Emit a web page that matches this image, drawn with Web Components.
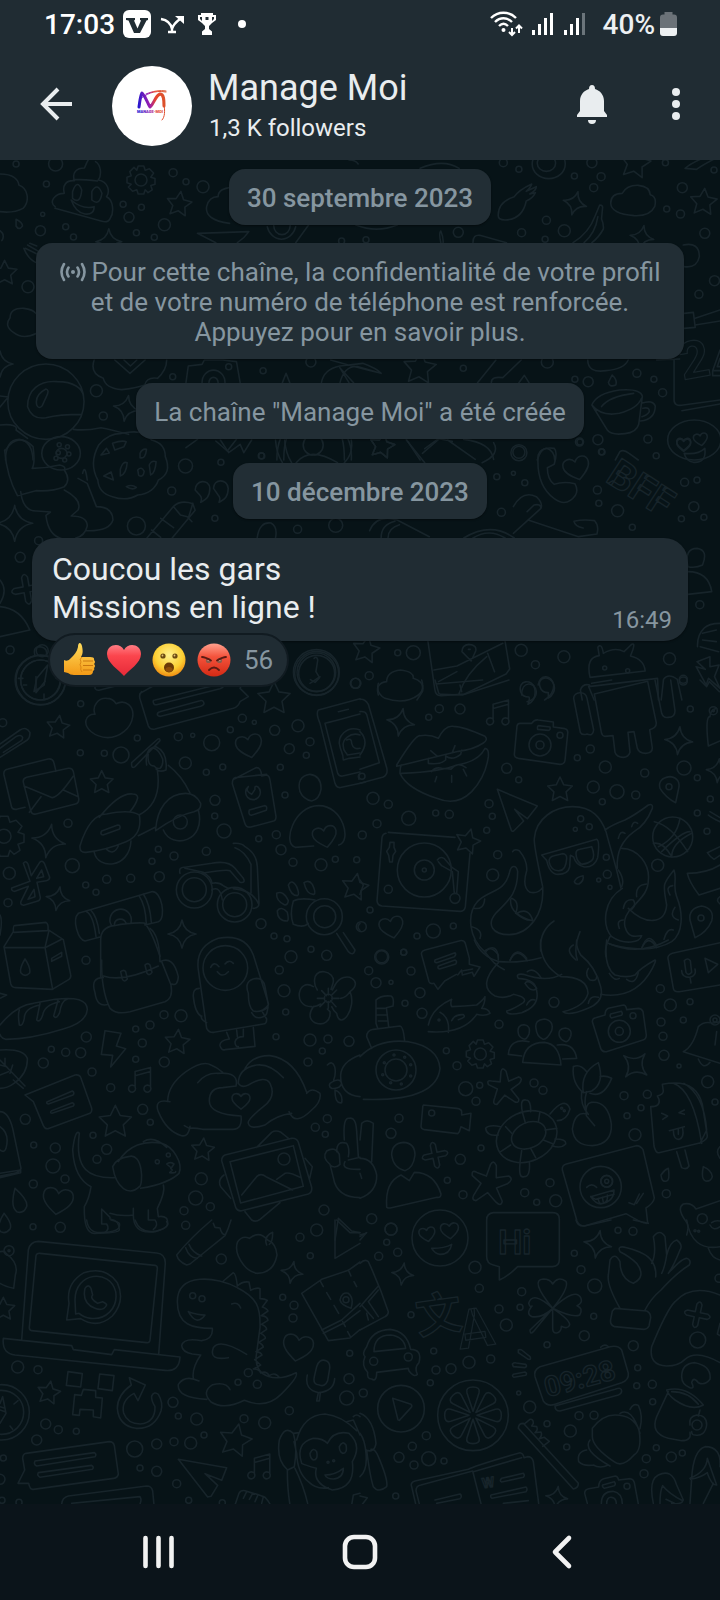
<!DOCTYPE html>
<html lang="fr">
<head>
<meta charset="utf-8">
<meta name="viewport" content="width=device-width, initial-scale=1">
<title>Manage Moi</title>
<style>
  body {
    margin: 0;
    background: #0b141a;
    color: #e9edef;
    font-family: Roboto, "Noto Sans", sans-serif;
  }
</style>
</head>
<body>
<channel-app>
  <status-bar slot="top" time="17:03" battery="40%"></status-bar>
  <channel-header slot="top" name="Manage Moi" followers="1,3 K followers"></channel-header>
  <chat-chip strong>30 septembre 2023</chat-chip>
  <chat-chip class="notice" wide icon>Pour cette chaîne, la confidentialité de votre profil et de votre numéro de téléphone est renforcée. Appuyez pour en savoir plus.</chat-chip>
  <chat-chip>La chaîne "Manage Moi" a été créée</chat-chip>
  <chat-chip strong>10 décembre 2023</chat-chip>
  <chat-message time="16:49">
    Coucou les gars<br>Missions en ligne !
    <reaction-pill slot="reactions" count="56"></reaction-pill>
  </chat-message>
  <nav-bar slot="bottom"></nav-bar>
</channel-app>

<script>
  class ChannelApp extends HTMLElement {
    connectedCallback() {
      this.attachShadow({ mode: 'open' });
      this.shadowRoot.innerHTML = `
        <style>
          :host {
            display: flex;
            flex-direction: column;
            min-height: 100vh;
          }
          header {
            background: #202c33;
          }
          main {
            position: relative;
            flex: 1;
            overflow: hidden;
            background: #071317;
          }
          .feed {
            position: relative;
            display: flex;
            flex-direction: column;
            align-items: center;
            gap: 24px;
            padding: 9px 32px 24px;
          }
          ::slotted(.notice) {
            margin-top: -6px;
          }
          ::slotted(chat-message) {
            margin-top: -5px;
          }
        </style>
        <header><slot name="top"></slot></header>
        <main>
          <doodle-wallpaper></doodle-wallpaper>
          <div class="feed"><slot></slot></div>
        </main>
        <slot name="bottom"></slot>
      `;
    }
  }

  class StatusBar extends HTMLElement {
    connectedCallback() {
      this.attachShadow({ mode: 'open' });
      this.shadowRoot.innerHTML = `
        <style>
          :host {
            display: flex;
            align-items: center;
            justify-content: space-between;
            height: 48px;
            padding: 0 43px 0 44px;
            color: #fff;
            font-size: 28px;
            font-weight: 500;
            line-height: 32px;
          }
          .side {
            display: flex;
            align-items: center;
          }
          .left { gap: 8px; }
          .right { gap: 5px; color: #edf0f2; }
          span { padding-top: 2px; }
          svg { display: block; }
        </style>
        <div class="side left">
          <span>${this.getAttribute('time')}</span>
          <svg width="28" height="28" viewBox="0 0 28 28">
            <rect width="28" height="28" rx="6" fill="#fff"/>
            <path d="M3 8h9v2l-1 .5 3.500 8 3.500-8L17 10V8h8v2l-1.500.5L17 23h-6L5.500 10.500 3 10z" fill="#202c33"/>
          </svg>
          <svg width="30" height="24" viewBox="0 0 30 24" fill="none" stroke="#fff" stroke-width="2.400">
            <path d="M2 7C8 8 12 12 13 17M13 17C14 13 17 10 21 7M13 15v6M9 20h8"/>
            <path d="M16 4h9v8z" fill="#fff" stroke="none"/>
          </svg>
          <svg width="20" height="24" viewBox="0 0 20 24">
            <path d="M4 1h12v2h3v5l-4 3-3 3v3l3 2.500V23H5v-3.500L8 17v-3l-3-3-4-3V3h3z" fill="#fff"/>
            <path d="M3 5v2l2 2V5zM17 5v2l-2 2V5zM8.500 5h3v3h-3z" fill="#202c33"/>
          </svg>
          <svg width="40" height="24" viewBox="0 0 40 24"><circle cx="17" cy="12" r="4" fill="#fff"/></svg>
        </div>
        <div class="side right">
          <svg width="35" height="26" viewBox="0 0 35 26" fill="none" stroke="#fff" stroke-width="2.400">
            <path d="M3 7C10 0 21 0 28 7M7 11c5-5 12-5 17 0M11 15c3-3 6-3 9 0"/>
            <circle cx="15.500" cy="19" r="2" fill="#fff" stroke="none"/>
            <path d="M24 17v7M21 21l3 3 3-3M31 22v-7.500M28 17.500l3-3 3 3" stroke-width="2"/>
          </svg>
          <svg width="70" height="26" viewBox="0 0 70 26" stroke="#fff" stroke-width="3">
            <path d="M5.500 19v5M11.500 13v11M17.500 7v17M23.500 2v22M37.500 19v5M43.500 13v11M49.500 7v17"/>
            <path d="M55.500 2v22" stroke="#6b757b"/>
          </svg>
          <span>${this.getAttribute('battery')}</span>
          <svg width="17" height="24" viewBox="0 0 17 24">
            <path d="M4.500 0h8v2.500H14q3 0 3 3V16H0V5.500q0-3 3-3h1.500z" fill="#6b7278"/>
            <path d="M0 16h17v5q0 3-3 3H3q-3 0-3-3z" fill="#edf0f2"/>
          </svg>
        </div>
      `;
    }
  }

  class ChannelHeader extends HTMLElement {
    connectedCallback() {
      this.attachShadow({ mode: 'open' });
      this.shadowRoot.innerHTML = `
        <style>
          :host {
            display: flex;
            align-items: center;
            height: 112px;
            padding: 0 20px 0 32px;
          }
          button {
            display: grid;
            place-items: center;
            width: 48px;
            height: 56px;
            padding: 0;
            border: 0;
            background: none;
            color: #e9edef;
          }
          .avatar {
            display: block;
            width: 80px;
            height: 80px;
            margin: 4px 16px 0 32px;
            border-radius: 50%;
            background: #fff;
          }
          .who {
            flex: 1;
            min-width: 0;
            padding-top: 4px;
          }
          h1, p {
            margin: 0;
            font-weight: 400;
          }
          h1 { font-size: 36px; line-height: 42px; margin-bottom: 2px; }
          p { font-size: 24px; line-height: 34px; padding-left: 1px; }
          .more { margin-left: 36px; }
        </style>
        <button aria-label="Retour">
          <svg width="34" height="34" viewBox="0 0 34 34" fill="none" stroke="currentColor" stroke-width="4">
            <path d="M33 17H4M19 2 4 17l15 15"/>
          </svg>
        </button>
        <svg class="avatar" viewBox="0 0 80 80">
          <defs>
            <linearGradient id="ink" gradientUnits="userSpaceOnUse" x1="26" y1="38" x2="54" y2="34">
              <stop offset="0" stop-color="#2416cf"/>
              <stop offset=".4" stop-color="#9a1fb0"/>
              <stop offset=".65" stop-color="#e8452c"/>
              <stop offset="1" stop-color="#d9552c"/>
            </linearGradient>
          </defs>
          <g fill="none" stroke="url(#ink)" stroke-linecap="round" stroke-linejoin="round">
            <path d="M27 41c1-6 1-10 3-14 4 4 5 9 8 14 4-3 5-11 10-13 4 0 4 6 4 12" stroke-width="3"/>
            <path d="M28 33c7-5 13-9 26-7M34 28c7-3 14-4 20-3" stroke-width="1"/>
            <path d="M52 38c1 7 1 13-2 16" stroke-width="1"/>
          </g>
          <text x="25" y="47" font-size="4" font-weight="900" fill="url(#ink)">MANAGE-MOI</text>
        </svg>
        <div class="who">
          <h1>${this.getAttribute('name')}</h1>
          <p>${this.getAttribute('followers')}</p>
        </div>
        <button aria-label="Notifications">
          <svg width="32" height="40" viewBox="0 0 32 40" fill="currentColor">
            <path d="M16 1c2 0 3 1.500 3 4 5 1.500 9 6 9 12v10l3 4v2H1v-2l3-4V17C4 11 8 6.500 13 5c0-2.500 1-4 3-4zM12 36h8q0 4-4 4t-4-4z"/>
          </svg>
        </button>
        <button class="more" aria-label="Plus d'options">
          <svg width="8" height="32" viewBox="0 0 8 32" fill="currentColor">
            <circle cx="4" cy="4" r="4"/><circle cx="4" cy="16" r="4"/><circle cx="4" cy="28" r="4"/>
          </svg>
        </button>
      `;
    }
  }

  class ChatChip extends HTMLElement {
    connectedCallback() {
      const icon = this.hasAttribute('icon') ? `
        <svg width="27" height="20" viewBox="0 0 27 20" fill="none" stroke="currentColor" stroke-width="2.600" stroke-linecap="round">
          <path d="M4 2q-5 8 0 16M22 2q5 8 0 16M8.500 5.500q-3 4.500 0 9M17.500 5.500q3 4.500 0 9"/>
          <circle cx="13" cy="10" r="2" fill="currentColor" stroke="none"/>
        </svg>` : '';
      this.attachShadow({ mode: 'open' });
      this.shadowRoot.innerHTML = `
        <style>
          :host {
            display: block;
            padding: 14px 18px 12px;
            border-radius: 16px;
            background: #222e35;
            box-shadow: 0 1px 2px rgba(0, 0, 0, .4);
            color: #8696a0;
            font-size: 26px;
            line-height: 30px;
            text-align: center;
          }
          :host([strong]) { font-weight: 500; }
          :host([wide]) { margin-inline: 4px; }
          svg { vertical-align: -1px; margin-right: 5px; }
        </style>
        ${icon}<slot></slot>
      `;
    }
  }

  class ChatMessage extends HTMLElement {
    connectedCallback() {
      this.attachShadow({ mode: 'open' });
      this.shadowRoot.innerHTML = `
        <style>
          :host {
            display: block;
            align-self: stretch;
          }
          article {
            display: flex;
            align-items: flex-end;
            justify-content: space-between;
            padding: 12px 16px 7px 20px;
            border-radius: 24px;
            background: #202c33;
            box-shadow: 0 1px 2px rgba(0, 0, 0, .4);
          }
          .text {
            padding-bottom: 8px;
            font-size: 32px;
            line-height: 38px;
          }
          time {
            color: #8696a0;
            font-size: 24px;
            line-height: 28px;
          }
          .reactions {
            display: flex;
            margin: -8px 0 0 16px;
          }
        </style>
        <article>
          <div class="text"><slot></slot></div>
          <time>${this.getAttribute('time')}</time>
        </article>
        <div class="reactions"><slot name="reactions"></slot></div>
      `;
    }
  }

  class ReactionPill extends HTMLElement {
    connectedCallback() {
      this.attachShadow({ mode: 'open' });
      this.shadowRoot.innerHTML = `
        <style>
          :host { display: block; position: relative; }
          button {
            display: flex;
            align-items: center;
            gap: 11px;
            height: 54px;
            padding: 0 14px 0 12px;
            border: 2px solid #111b21;
            border-radius: 27px;
            background: #202c33;
            color: #8696a0;
            font: 26px/30px Roboto, sans-serif;
          }
          svg { display: block; width: 34px; height: 34px; }
          span { margin-left: 2px; }
        </style>
        <button aria-label="Réactions">
          <svg viewBox="0 0 34 34">
            <defs>
              <linearGradient id="hand" x1="0" y1="0" x2="0" y2="1">
                <stop offset="0" stop-color="#ffdc5c"/><stop offset="1" stop-color="#f39a16"/>
              </linearGradient>
              <linearGradient id="love" x1="0" y1="0" x2="0" y2="1">
                <stop offset="0" stop-color="#ff7d84"/><stop offset=".35" stop-color="#fb454d"/><stop offset="1" stop-color="#e62a38"/>
              </linearGradient>
              <radialGradient id="wow" cx=".5" cy=".35" r=".65">
                <stop offset="0" stop-color="#fff08c"/><stop offset=".65" stop-color="#fbcf33"/><stop offset="1" stop-color="#f08c12"/>
              </radialGradient>
              <linearGradient id="mad" x1="0" y1="0" x2="0" y2="1">
                <stop offset="0" stop-color="#ffa18e"/><stop offset=".4" stop-color="#f4533c"/><stop offset="1" stop-color="#d42a14"/>
              </linearGradient>
            </defs>
            <path d="M2 17q4 2 7-2c3-3 6-6 7-11 0-5 3-5 4-1 1 5 1 8-1 11h9q5 0 4 3 2 2 0 4 2 2 0 4 1 2-1 3 0 4-4 4H12q-4 0-6-2l-4-1z" fill="url(#hand)"/>
            <path d="M21 18h10M21 22.500h10M21 27h9" stroke="#c9760f" stroke-width="1.200" fill="none"/>
            <path d="M20 14q-3 2-1 5-2 3 0 5-1 3 1 5" stroke="#d98412" stroke-width="1" fill="none"/>
          </svg>
          <svg viewBox="0 0 34 34">
            <path d="M17 33C12 27 0 20 0 11 0 1 13-1 17 7 21-1 34 1 34 11c0 9-12 16-17 22z" fill="url(#love)"/>
          </svg>
          <svg viewBox="0 0 34 34">
            <circle cx="17" cy="17" r="16.500" fill="url(#wow)"/>
            <circle cx="11" cy="13" r="2.600" fill="#6b4a12"/><circle cx="23" cy="13" r="2.600" fill="#6b4a12"/>
            <circle cx="10.500" cy="12.500" r=".9" fill="#e6c67a"/><circle cx="22.500" cy="12.500" r=".9" fill="#e6c67a"/>
            <ellipse cx="17" cy="24.500" rx="5" ry="5" fill="#6b3a06"/>
            <ellipse cx="17" cy="26.500" rx="3.500" ry="2.500" fill="#8f4f09"/>
          </svg>
          <svg viewBox="0 0 34 34">
            <circle cx="17" cy="17" r="16.500" fill="url(#mad)"/>
            <circle cx="11.500" cy="17.500" r="2.600" fill="#8b5c4c"/><circle cx="22.500" cy="17.500" r="2.600" fill="#8b5c4c"/>
            <circle cx="11.500" cy="17" r="1" fill="#e8b7a4"/><circle cx="22.500" cy="17" r="1" fill="#e8b7a4"/>
            <path d="M5 14q3 0 9 3.500M29 14q-3 0-9 3.500M12 27q5-5 10 0" stroke="#5b1a12" stroke-width="1.800" stroke-linecap="round" fill="none"/>
          </svg>
          <span>${this.getAttribute('count')}</span>
        </button>
      `;
    }
  }

  class NavBar extends HTMLElement {
    connectedCallback() {
      this.attachShadow({ mode: 'open' });
      this.shadowRoot.innerHTML = `
        <style>
          :host { display: block; }
          nav {
            display: grid;
            grid-template-columns: repeat(3, 1fr);
            height: 96px;
            padding: 0 8%;
            background: #0b141a;
          }
          button {
            display: grid;
            place-items: center;
            padding: 0;
            border: 0;
            background: none;
            color: #f2f2f2;
          }
          svg {
            fill: none;
            stroke: currentColor;
            stroke-width: 4.600;
            stroke-linecap: round;
            stroke-linejoin: round;
          }
        </style>
        <nav>
          <button aria-label="Applications récentes"><svg width="36" height="36" viewBox="0 0 36 36"><path d="M5.500 4v28M18.500 4v28M31.500 4v28"/></svg></button>
          <button aria-label="Accueil"><svg width="36" height="36" viewBox="0 0 36 36"><rect x="3" y="3" width="30" height="30" rx="9"/></svg></button>
          <button aria-label="Précédent"><svg width="36" height="36" viewBox="0 0 36 36"><path d="M25 4 11 18l14 14"/></svg></button>
        </nav>
      `;
    }
  }

  // The wallpaper is a set of tiles. Dots, marks and words are placed in tile
  // units but sized in pixels, art is free-form line drawing.
  const WIDE = [720 / 1568, 1 / 3];
  const FINE = [1 / 3, 1 / 3];

  const TILES = [
    {
      at: [0, 160], scale: WIDE,
      dots: [[35,12,3],[121,12,7],[377,38,4],[442,80,6],[101,72,3],[405,65,3],[268,133,3],[281,172,5],[308,142,3],[358,194,6],[88,212,5],[143,200,3],[93,163,2],[160,231,3],[297,218,3],[336,232,3],[797,239,3],[744,243,3],[1096,8,4],[1130,28,3],[1251,48,3],[1289,8,5],[1309,50,4],[1293,83,4],[1486,83,5],[1449,8,3],[1452,147,3],[1482,162,4],[1190,181,4],[1136,218,4],[1187,238,3],[1229,212,6],[1535,220,5],[998,217,5],[1556,362,5],[1522,403,4],[1555,30,3],[61,380,6],[210,692,6],[225,768,4],[376,650,3],[573,632,3],[498,620,3],[677,606,5],[1009,625,3],[1192,606,6],[1252,658,3],[1281,665,5],[1387,640,4],[1424,658,3],[1443,698,4],[1262,846,4],[1302,839,5],[1411,837,4],[1130,877,6],[570,888,3],[1311,876,3],[307,60,6]],
      marks: [['star',390,133,13,8],['star',1383,10,16,10],['star',1532,127,14,5],['star',10,340,13,0],['star',914,625,17,5],['star',832,858,13,12],['spark',237,245,13,0],['spark',1252,130,12,15],['spark',1398,232,12,10],['spark',275,745,13,10],['spark',0,612,13,0],['gear',307,60,14,0],['heart',1489,855,7,0],['heart',1526,838,7,-10]],
      words: [['2',1487,660,52,-10]],
      art: `
        <path d="M0 42C30 42 40 60 41 75 62 85 65 125 50 145Q30 160 0 155M120 140c-15-15 0-40 20-40-5-25 5-40 22-38-6-25 5-38 22-38q6-20 8-24M208 5c12 10 14 40 6 55 22 5 26 35 18 50 16 10 16 50 8 65q-5 15-20 8L120 145M158 95q10-40 20-5-3 45-20 25zM200 95q12-30 22 5-5 40-22 20zM155 120q25 30 50 20 0 25-20 22-20-4-30-42M160 58q30 0 52 5"/>
        <path d="M500 190q-55-10-50-50 5-30 25-30 0-25 30-28M430 220l112-5q-10 20-25 33M430 220l40 28M582 200a32 50 0 0 0 62 0M596 196a18 28 0 0 0 36 0M644 248l28-53M775 195q45 25 90 0M780 12q-5-12-20-12M960 248q-5-30 0-35 6 20 5 35M1030 248q0-25 15-22l58 22M915 25q50-30 85 0"/>
        <ellipse cx="1195" cy="12" rx="36" ry="44"/><ellipse cx="1190" cy="10" rx="20" ry="24"/>
        <path d="M1085 165q0-40 35-55 10-20 38-38-2 10-12 22l22-14q0 10-14 22l12-4q-6 18-20 25-8 55-46 57-16 0-15-15zM1248 248q35-30 48-80l10-33q8 0 6 12l-2 30q5 15 4 30-10 25-25 41M1272 248q25-30 30-78M1330 130q0-30 25-30 10-25 35-24 25 3 26 28 15 5 10 35-10 30-45 28-50-5-51-37M1492 25q20-25 76-48M1492 25l25 3q15-15 51-40M1488 255q35-10 35 35-5 35-33 30M0 212q12 12 4 30M35 178q14 10 14 20-8 15-14 0zM55 265l30 20M60 255l25 20M65 250l15 8M52 265q10 35 30 45"/>
        <path d="M80 520Q50 540 30 518q-22-20-8-45 0-30 30-28 20 3 26 15M100 612c45 0 83 50 83 113s-38 113-83 113-83-50-83-113 38-113 83-113zM60 740c0-50 25-80 65-75 35 0 55 20 57 45M60 740q10 40 40 33 30-10 78-10M80 735q-5-30 20-48 8 2 2 20l-10 30q-8 12-12-2M0 708l18 3-18 30M205 600q-10 40 20 55 5 30 40 34 30-4 50-14 5-25 28-20 20-25 20-55M250 600l33 40 33-40M270 600l14 18 14-18M405 668l5-50 30-5 5-13h40l30 5 8 63M440 668a24 36 0 0 1 50 0M455 668a10 16 0 0 1 20 0M615 668l8-28 8 28M700 668q5-40 40-50l50-8q30 15 40 30-10-5-50-20-30-5-40 50M720 600q50 20 110 40M760 668l-20-45 30 45M1040 668l40-68M1070 668q0-20 25-15l40-53M1130 668l12-22 10 22M1280 600q0 40 40 32 40-5 48-32M1333 645q12 15 8 30-14 8-16-8z"/>
        <path d="M1490 460l20-3 4 45-24 3M1514 475l54-25M1514 495l54-12M1468 600v120q0 20 20 15l80-15M1485 752l83-20M1430 600l50-3M1568 570l-16 62h16M1568 595l-6 25h6M1552 632l0 15h16"/>
        <path d="M1289 735q10-35 60-45 45-5 50 18l-8 85q-5 25-30 28-30 5-38-10zM1289 735q20 35 60 25 40-15 48-45M1310 740q15-30 70-40M1397 730q25-12 30 8 0 40-32 45M1400 745q15-5 14 10-4 10-16 15"/>
        <ellipse cx="1512" cy="840" rx="58" ry="60"/><path d="M1490 880q30 5 45-15 4 45-25 42-16-4-20-27"/>
        <path d="M0 795q40-5 35 15l25 25M160 808q25 5 60-5 20 5 60 20M12 900q0-60 30-62 28 5 30 62M603 900q0-40 8-65M618 900q0-40 6-65M765 900q2-40-8-65M750 900q0-40-5-65M885 838l30 62M1170 900q8-35 20-35 18 8 18 35M1340 900l10-25q8-8 20 5l20 20M920 880l35-42M430 838l-25 25M515 838l-20 35-25-30M1010 838q60 10 65 60"/>
        <ellipse cx="133" cy="880" rx="42" ry="50"/><ellipse cx="134" cy="880" rx="12" ry="15"/>
      `
    },
    {
      at: [0, 440], scale: WIDE,
      dots: [[404,78,7],[481,67,3],[374,153,4],[468,235,3],[297,258,9],[648,268,4],[731,256,7],[84,302,4],[44,352,5],[1130,38,8],[1082,110,3],[1118,100,2],[1143,128,3],[1092,217,4],[1310,35,3],[1429,47,3],[1491,127,4],[1301,150,4],[1304,190,3],[1345,212,6],[1511,200,5],[1518,120,3],[1484,236,3],[1533,232,3],[1377,262,3],[1524,494,4],[1135,631,6],[1166,674,4],[1228,650,6],[1458,656,6],[1488,718,4],[900,638,7],[866,638,3],[804,707,4],[775,730,5],[22,630,4],[92,632,6],[682,15,10],[569,47,3],[1263,6,3],[1317,684,2],[1367,692,2],[129,14,2],[127,38,2],[147,20,2],[150,42,2],[141,60,2],[122,55,2]],
      marks: [['spark',32,250,18,0],['plus',58,448,15,-10],['star',832,18,13,12],['star',797,630,14,10],['heart',1256,85,13,-15],['heart',1489,12,7,0]],
      words: [['BFF',1316,122,40,33]],
      art: `
        <path d="M12 30Q40-25 72 20q5 50-2 65 30 0 60-10 15 5 10 15 15 30 0 50-25 15-62 12l-40 15Q15 110 10 30M45 155q5 60 35 58l30 3-10 10q5 60 35 70M140 150q40 30 30 60l-15 18q35 0 35 30-5 30-25 36M170 115l20 15 20 70q35 0 36 40-8 35-60 32M180 100q5-30 10 20"/>
        <path d="M215 15q20-35 50-35 50-15 65 20 30 10 30 50 15 50-15 70-10 40-45 45-25 20-55 5-30-10-32-50-20-50 2-105M220 45l12-20 6 14zM226 108l16-12 5 24zM245 10q20-10 30-5l-5 15-20 10zM305 40q5-15 14-12-2 30-14 25zM262 88q5-25 15-20-2 35-15 40zM300 90q8-12 14 4-2 20-12 12zM325 75q5-15 15-10-2 35-12 40zM275 140q12-8 22 2-8 10-22-2z"/>
        <path d="M425 150c0-30 30-35 32-5 0 30-12 35-20 42 3-12 2-15-2-22zM465 145c0-30 30-30 32 0 0 30-12 35-20 42 3-12 2-15-2-22zM320 294l58-95q15-20 42-8l5 20-50 83M330 270l20 22M420 190l-10 45M378 200l15 25 15 5 10 15M350 235l28 28"/>
        <path d="M1172 45q5-25 35-20 8 10 0 48l-15 10q0 35 15 50 20-10 45-2 12 30-10 50-15 15-35-5-40-40-35-131M1118 200q20-50 50-30 15 20 10 35l-60 75M1150 240l110 50 40-8q5-25-5-40-25-5-45 2 2 15 20 20M1178 205q0-15-15-10l-15 20M1010 294q60-50 110 0M1030 294q35-30 70 0M560 294q5-50 30-45 15 10 10 45M805 272q15-50 60-32l70 50M830 294q0-40 30-50M845 294q0-30 25-40M480 0l18 38 25-25 8 25L548 0M600 0q2 40 15 68M620 0q2 40 15 68M645 68q30-50 90 0M765 0q5 40-15 68M885 0l40 68M1050 68q40-25 25-60M975 0l60 58M925 26l30-30 30 8"/>
        <path d="M1498 380q-8-55 20-55 25 5 12 50-15 10-32 5M1498 395q45 0 52 60l-52 8M1568 550q-25 0-35 15-15 20-14 55M1530 580l30-10M1530 600l30 5M1525 620l40 15M1518 665l28-15 0 30 20-5-10 35 12 35-25-30-5 20-22-55 20 8z"/>
        <path d="M0 500q45 5 65 70L0 590M0 420q18 30 0 70"/>
        <ellipse cx="88" cy="720" rx="55" ry="75"/><ellipse cx="88" cy="720" rx="43" ry="60"/><path d="M80 715l24-40-8 60-22 20zM40 715h10M130 715h-8M76 645q-5-25 12-25 18 5 12 28"/>
        <ellipse cx="689" cy="697" rx="50" ry="68"/><ellipse cx="689" cy="697" rx="42" ry="58"/><path d="M684 655q6-8 8 5l-4 35 8 18-10 14-10-8"/>
        <path d="M932 604l15 145q2 20 15 18l50-5 90-60 8-15-10-83M945 690l50-12 100-68M955 725l40-30M1000 760q15-60 60-110M1062 640l15 55M1006 635q0-20 15-22 18 2 15 20l-10 30zM1020 628h4"/>
        <path d="M824 765q-8-35 18-40 0-30 30-35 30 5 28 25 25 10 20 40l-12 25M1285 712q-10-60 20-65l-3-25q8-15 12 18 25-20 45-5l15-20q10-10 4 15l-5 18q30 10 32 45zM1294 780l-12-40 150-25 2 65M1136 765c0-45 30-40 32-10 0 20-10 25-20 30M1172 735c5-35 30-30 34 0 0 20-8 35-20 45M1268 780l-4-30q5-20 20-15M1440 780l5-62q10-20 30 0l10 62"/>
      `
    },
    {
      at: [0, 680], scale: FINE,
      dots: [[242,71,3],[8,128,4],[241,218,3],[313,220,3],[412,174,3],[363,225,8],[535,170,4],[578,166,2],[635,188,8],[556,249,6],[691,149,3],[727,115,4],[763,127,2],[824,151,5],[894,137,6],[868,206,5],[930,185,4],[919,226,3],[619,277,3],[668,261,3],[841,262,3],[855,345,3],[645,361,5],[644,408,3],[672,453,7],[776,476,3],[829,464,4],[843,509,5],[879,547,4],[963,554,6],[1006,538,3],[1070,539,3],[204,430,4],[217,557,7],[28,580,6],[257,615,3],[320,598,4],[288,637,3],[392,595,4],[456,544,3],[475,508,3],[522,528,4],[619,514,4],[478,590,5],[24,668,4],[783,731,5],[822,768,3],[861,776,3],[933,808,3],[873,830,6],[980,826,5],[12,469,7],[1066,10,5],[583,629,12],[704,674,12],[974,710,11],[541,426,7],[973,710,18]],
      marks: [['star',174,142,12,8],['star',305,308,12,0],['star',822,56,17,0],['star',1065,622,14,10],['heart',748,198,13,-12],['heart',975,470,12,-12],['spark',146,483,17,10],['spark',174,656,12,10],['spark',546,762,14,0],['gear',12,469,20,0]],
      words: [],
      art: `
        <path d="M285 103c-10-25 10-50 35-48 15 0 22 5 28 16 30-15 55 10 50 40-5 35-40 62-75 62-40-2-70-28-65-52 2-12 15-20 27-18zM425 35q-10 10-4 25l24 78q5 12 20 9l235-62q15-5 20-20l25-15-25-25 5-10M420 40l50-28M465 60l195-48q12-3 10 6 0 5-10 8l-190 48q-8 2-10-6t5-8zM480 95l120-33q10-3 12 8 0 6-10 9l-120 30q-10 0-10-6t8-8zM0 192l60-42q20-12 30 8 0 15-8 22L0 232M0 205l48-35q15-8 20 2 0 8-4 10L10 217M285 15v10q5 8 15 5l80-20"/>
        <circle cx="122" cy="0" r="74"/><circle cx="122" cy="0" r="60"/><path d="M108-10v48l28-35M70 15h10M132 42v14"/>
        <circle cx="950" cy="-20" r="66"/><circle cx="950" cy="-20" r="54"/><path d="M930 10l30-20"/>
        <path d="M75 382l-25 6q-14 2-16-10L12 285q-3-15 12-18l120-30q15-2 18 12l6 25M80 292l125-27q12-2 15 10l16 80q2 14-10 17l-118 30q-12 3-16-10l-22-85q-2-12 10-15zM72 318l85 35q20-2 63-65M123 350l-35 47M190 330l45 20"/>
        <path d="M395 248l75-68q10-8 10 2l-75 78q-12 8-10-12zM440 255q-8-50 28-55 35 15 30 70-20 8-30-3M462 258q-18 0-18-28t18-25q15 5 26 32 2 20-8 28-10 2-18-7M472 270q15 100-55 135M505 256q40 30 65 83M418 405q10 60-40 80-60 25-120 32-20 2-18-20 30-95 80-95 70-15 98 3zM298 412q60-75 100-70 15 0 15 12-5 20-24 42M305 453l48-18q10 0 6 12l-50 18q-10-2-4-12zM283 518c10 50 105 50 110-35M320 508q20 20 35-10M415 467l52-26M467 447c5-60 35-107 90-107q30 0 45 30 2 20-20 25-50 10-115 57zM490 450c25 60 130 35 105-60"/>
        <path d="M703 297l65-34q15-2 17 25l15-3q8 2 10 15l18 110q0 12-10 14l-65 17q-14 2-18-10l-38-120q0-15 8-18l95-10M745 320a22 22 0 1 0 28 0q-10-4-8 8l-10 15q-20-10-10-23M748 390l45-13q10 0 6 14l-45 15q-10-2-6-16zM900 335q-12-45 30-52 35 5 33 45-5 30-28 35-25-5-35-28zM886 502c-40-10-5-125 70-125s100 110 60 118M886 502l55-4M955 90q-8 10 5 40l45 180q5 16 20 12l70-15M955 90l125-34M975 130q20-5 105-28M975 130l38 150q5 10 15 8l52-12M1015 95l30-7"/>
        <path d="M1080 150c-40-15-70 20-60 50 2 12 10 20 10 40l18-5 32-4M1080 165c-30-10-55 15-50 35 0 15 8 15 12 25l38-6M1040 180q15-8 15 10 5 20 25 15"/>
        <path d="M70 550q8-10 14 2l10 35 25-40q10-8 15 5l15 40q0 8-10 10l-28 5 10 45q0 10-10 12l-40 12q-12-2-8-12l22-45-40 15q-12 0-10-10l55-20zM110 595l15-25 6 20zM84 658l18-30 3 22z"/>
        <path d="M540 580q-5-20 15-18l80-12q50-10 70 15l25 30q8 15-10 12l-30-35q-10-5-85 8M555 565l55 12M608 578q25 10 28 32 20-5 35 8 10 5 15 8M635 630q25-15 32 30M700 490q25-2 35 10 35 20 37 60l5 110q0 15-18 15M705 503q30 10 48 50l0 85M700 626q60 5 76 47"/>
        <circle cx="583" cy="630" r="54"/><circle cx="704" cy="674" r="52"/>
        <path d="M865 615q10-20 25 5 10 25 2 27-20 0-27-32zM912 608q15-10 25 5 12 25 5 30-22 2-30-35zM830 640q20-10 35 22-2 15-12 12-25-12-23-34zM832 692q12-15 30 5 5 22 0 26-30 0-30-31zM945 660q-45-8-65 3-12 40 0 70 30 12 45-3M1010 760l35 55q15 15 20-5l-35-52"/>
        <path d="M235 700l220-65c30-5 45 80 20 90l-40 10M235 700c-20 20 0 80 20 83l45-12M260 695q20 10 28 75M272 690q20 20 26 70M417 647q20 30 22 85M430 642q20 30 24 85M335 737a32 32 0 1 1 58-10M343 733a18 18 0 0 1 35-3M302 780q0-38 40-43 50-10 90-8 20 15 48 100M302 780v110"/>
        <path d="M12 800l28-45q0-18 3-18l95-10q8 5 6 22l46 30 22 105q2 8-5 14l-50 30-110-5q-12 0-15-12zM12 803l123 0M135 803l12-52M135 803l50-25M42 757l100-5M135 803l23 125M155 835l30-18v12l-30 15z"/>
        <path d="M75 837q-18 30-12 42 12 14 26 0 4-15-14-42M0 705q8 15 0 60M1080 280q-8 5-3 18M1080 730q-12 10 0 22"/>
      `
    },
    {
      at: [360, 680], scale: FINE,
      dots: [[238,86,4],[206,112,3],[300,87,5],[440,265,5],[476,299,3],[691,207,4],[652,233,3],[736,261,6],[700,321,6],[771,335,7],[854,279,4],[827,345,4],[727,365,3],[972,264,7],[1012,293,3],[1051,357,3],[1012,399,3],[1041,454,3],[991,87,3],[39,355,6],[85,373,4],[227,399,3],[268,403,4],[146,415,7],[51,431,4],[7,465,4],[387,371,4],[397,409,3],[380,451,3],[413,524,4],[398,585,6],[893,556,6],[739,532,3],[742,583,4],[716,600,2],[750,622,2],[662,416,3],[688,440,3],[646,448,2],[30,690,3],[4,740,5],[171,768,3],[220,753,7],[280,738,3],[131,817,3],[65,830,6],[193,570,10],[193,570,2],[85,628,4],[540,195,11],[540,195,4],[600,166,3],[927,320,3],[1023,714,3],[1060,92,4],[1060,92,1],[6,289,3],[970,3,4],[938,471,20],[193,570,27]],
      marks: [['spark',122,127,14,10],['spark',956,182,14,5],['star',600,330,13,0],['spark',1075,272,12,5],['star',323,485,13,15],['heart',95,742,12,-12],['note',416,98,14,0]],
      words: [],
      art: `
        <path d="M55 10q-8 30 20 45 60 20 100-10 20-15 10-45M225 0l10 35q0 8 12 8l60 2 140-45M228 12l140-12M300 15l5 20M482 35c-10-35 35-40 42-10 5 25-5 40-20 48q6-15 3-22-20 0-25-16zM540 20c-10-30 30-35 40-10 10 20-5 40-15 44l0-16q-20 0-25-18"/>
        <path d="M110 255q55-90 70-88 30-5 55 8 20-40 45-36 30 0 95 30 10 10-5 20-30 20-75 25-80 20-185 45zM125 280q120-5 165-25 65-10 85-50 12 0 10 25-8 60-50 105-45 45-105 20-90-30-110-75 0-20 5-25M205 235l0 15q35 5 52-10v-12q20 15 45-5l3-12M215 275q10-15 30-10 20 0 28 3 20-25 45-5M212 212l20 17M285 197l-8 20M230 290l-5 15M275 287v20M310 268l10 20"/>
        <path d="M480 130l35 0q8-12 20-10l45 6v15l35 5q10 2 8 15l-8 80q-2 12-15 12l-125-18q-12-2-12-12l8-85q2-8 9-8zM535 137l35 4q2 10-5 10l-32-3q-2-10 2-11z"/>
        <path d="M641 55c0-20 35-25 40 0l20 95q-2 20-20 12-15 5-20-5zM703 42l160-38 26 125q0 15-20 20l8 55q0 15-20 16-20 0-25-15l-10-50-18 2 6 60q-5 15-20 15-20 0-25-15l-6-50-25 2q-8-2-10-12zM695 10l60-10M885 0l20 100q5 15 20 12 20 0 20-20L932 0M1045 198q-10-90 5-88 0-20 20-25M1045 198l35-15M1020 0l20 20 8-15 30 30"/>
        <path d="M900 325q-8-30 30-35 35 5 25 40l-8 38q-30-15-47-43M990 720q-5-35 35-42 40 8 30 45-15 35-50 50z"/>
        <path d="M412 328l120 50-30 38-38-28 27 35-30 30q-6 3-8-5zM0 58q15-2 25 15l55 190q5 20-10 28L0 310M0 95q15-2 20 8l38 145-58 20M0 155q30 30 0 70"/>
        <path d="M85 457l200 15M330 520l-14 160q-2 14-15 14l-235-16q-14-2-15-16l15-190q2-10 12-12"/>
        <circle cx="285" cy="655" r="15"/>
        <path d="M90 487h12v15l5 12-8 12-2 20h-8l-3-20-6-12 8-12zM232 540q8-12 20-5l25 28 18 12-5 65M245 557l32 18 6 65M235 545l10 12"/>
        <path d="M548 620q-28-130-25-145c5-60 60-95 115-95 60 0 85 35 100 75 10 40 30 100 45 170M735 450q20-15 60-30 30-15 70-45 15-5 12 10-20 50-55 70-55 40-50 110M545 525l165-47q10 5 3 55-10 30-40 28-25-5-32-30l-10-5-2 35q-5 22-35 22-25 0-34-42zM567 545q0-15 15-18l25-6q14 0 13 15-2 35-22 36-25 2-31-27zM648 520q0-10 12-12l35-8q12 30 0 42-15 12-32 10-15-10-15-32M643 605q5-14 26-18 4 15-12 25-12 0-14-7"/>
        <path d="M548 622c5 80-40 140-100 142-50 0-70-30-40-65 40-40 65-60 65-125-5-20-20-20-25 5-15 60-60 50-95 85-35 40-25 110 20 150 20 25 30 40 60 55M458 515q5-10 20-3 25 30 22 60-15 50 10 65 25 5 38-15M785 505c50 0 85 50 80 95 0 40-30 60-45 80-20 15-30 40-25 60 10 35 30 30 50 27-5 20-50 30-90 3-30-35-25-110 32-145M805 685c50 50 110 50 115-10-10-60-15-60 22-105 10 30-5 45 8 80 20 50 20 110-15 135-50 30-120 25-185 8M750 770q-18 35-12 60M775 570q20 30 10 50M582 723q-45 30-40 90M660 755q-20 50-8 85"/>
        <path d="M342 685q30 5 32-28M335 740q35 10 25 35M375 812q35-25 40 20M450 840q20-45 50-5M455 655q25 10 12 45M470 700q35-20 48 20-20 5-50-20M452 658q-5 45 68 65M830 650q-5-35 30-38M790 685q5-30 30-25 10 15-5 28M778 745q-10-25 12-25M775 475q5-25 20-15M815 440q5-20 18-10M930 645q-15-25 8-28M955 720q-30-10-10-38M912 778q10-35 28-28M845 805q20-55 45-8"/>
        <path d="M883 425q50 10 100 90M960 415q-10 60-65 85M880 490q30-5 55 40M935 530q0-40 60-70M905 515q60-60 85-60"/>
        <path d="M1080 500l-38 18q10 15 20 20l18-12M1080 555q-40 25-98 25 5 25 35 65l63-20M1050 395l30 18M1045 405q8 8 35 20M0 600l10 15-10 28M1080 650q-15 10 0 22"/>
      `
    },
    {
      at: [0, 940], scale: FINE,
      dots: [[258,61,4],[407,267,3],[450,255,4],[492,224,4],[543,227,6],[427,309,4],[407,358,3],[493,366,5],[259,291,5],[154,328,3],[197,337,4],[242,338,5],[130,369,5],[276,396,4],[332,443,4],[428,508,5],[451,547,3],[76,538,5],[279,586,3],[320,628,5],[291,658,4],[101,615,3],[166,624,5],[159,678,7],[195,717,4],[100,732,4],[99,860,3],[181,862,5],[838,90,4],[852,152,6],[857,216,3],[828,290,3],[930,300,6],[984,297,4],[1047,304,5],[967,333,3],[924,366,4],[946,562,4],[982,536,4],[976,583,3],[604,716,6],[587,774,7],[631,800,4],[552,812,4],[557,856,4],[972,810,5],[852,657,6],[472,665,2],[505,645,2],[985,175,4]],
      marks: [['star',532,307,13,5],['star',346,547,17,0],['star',608,630,12,5],['heart',723,483,9,0],['heart',173,783,15,8],['note',422,420,14,0]],
      words: [],
      art: `
        <path d="M305 60q-2 90 25 145 20 20 60 10l105-30q25-10 18-50l-28-70M310 108q60 20 165-30M480 65q-2-80-30-100M480 65q40-20 55 45-2 30-20 22M310 113q-40 0-25 45 5 45 40 35M362 95q10-8 15 0l5 22q-10 12-15 0zM435 75q8-8 15 0l6 22q-8 12-15 3z"/>
        <path d="M0 255q50-60 100-65l65-12q95-12 97 30-2 40-75 60-95 30-170 30-15-5-17-15M58 210q-5 15 0 45 10 5 15-20 0-30 45-40M120 190l-10 50q10 10 18-15 5-30 50-40M175 178l-14 50q8 12 18-10 5-35 22-40M0 160l20 5-20 10"/>
        <path d="M315 272l48 8-14 38 28 8-45 55 6-35-34-3zM75 465l150-60q15-2 18 10l32 90q2 10-5 15l-122 45q-12 5-18-8l-30-72zM142 485l75-32q8 5 2 12l-74 27q-8-2-3-7zM155 512l62-24q8 3 3 10l-64 22q-8-2-1-8zM0 330q70-5 82 25 2 45-40 75-20 15-42 15M0 360l75 78M40 420l30 25M15 355v22M38 375l-8 25M0 375l20 5M0 405l25-10"/>
        <path d="M595 90q-10-70 60-95 80-15 105 50l45 145q2 15-20 22l15 25q0 15-10 15l-148 25q-15 2-22-12zM598 145q-20 0-18 25 5 50 25 60M605 228q-5 10 15 20M745 160q-15-40 25-45 20 0 25 25l10 55q-20 25-45 18-15-10-15-53M755 218q10 20 30 14 15-5 16-15l3-15M680 277l8 20q-30 5-28 20 5 15 15 12l90-10-5-56M710 270l2 20M730 268v22q-20 0-25 15 0 15 10 15M632 82q10-20 25-2M675 72q12-15 25-2M652 95q15 20 33 0"/>
        <circle cx="676" cy="84" r="67"/>
        <path d="M944 128c-8-50 66-38 55 2M1005 135c30-50 90-10 45 20M1050 155c22 50-30 120-40 65M990 215c5 60-90 40-50-15M935 200c-60 0-40-90 5-60M944 128q0 10 8 22M999 130l-6 18M1005 135l-8 15M1050 155q-12 18-28 20M1010 220q-10-8-15-20M990 215l-8-8M940 200q8 0 22-8M985 145v20M952 175h22M995 175h22M965 152l14 15M1010 150l-16 16M1008 200l-16-18M960 200l18-18M985 205v-20"/>
        <path d="M503 485q0-50 55-90 50-35 75-20 20 8 35 22M593 428q25-30 60-28 65-5 55 38l-40 5q-40 0-40 40 0 40 95 45 5 40-25 40l-90 0q-25-5-40-3l-15-8M510 485q-50-10-35 30 25 60 70 72 20 5 25-28M715 430q0-45 55-55 40-5 80 38M715 430q10 15 30 5 50-30 65-5 20 40-20 70-50 40-45 50 5 20 50 5 35-30 80-35M735 385q25-40 75-38 75 10 110 110M920 460q15-20 40 0 5 25-25 50-50 50-68 5"/>
        <path d="M982 375q15-15 22 5 5 20-3 40M1005 450q25 10 20 38-20 5-20-38M990 430q30-20 35 0-5 18-30 15-10-5-5-15M1080 345q-55 20-58 60-2 60 58 65M0 515q25 0 38 50l25 120q-5 12-20 15l-43 8M0 560q30 20 18 65-5 15-18 5M0 700l62-10v8L0 713"/>
        <path d="M238 580q-12-15-20 50 5 85 55 110-5 35-20 60-2 80 30 80 70 0 75-10 0-30-28-33v-5q-10-10-25-25v45l15 0q10 15-5 25M330 820q30 10 70 5 0 55 55 50 60-5 45-40-10-8-25-5l-3-25q25-50 18-70M238 580c-15 110 30 135 105 133M400 805v20M445 810v30h20q12 15-5 28"/>
        <path d="M355 665c30-50 80-65 130-55 35 10 65 60 52 90q-30 30-115 45M430 605q30-20 70 17M385 650c45-15 45 85 33 90-30 30-70 5-80-60q10-25 47-30M500 672q10-8 22 0l-8 12zM512 685l5 5-8 8q18 2 18-3"/>
        <path d="M45 745q-15 55 5 70 20 8 30-15 5-20-35-55M12 820q-25 40-10 55 15 8 28-8 8-15-18-47"/>
        <path d="M675 645l200-50q15-2 20 12l40 135q2 15-10 20l-200 50q-12 3-18-10l-42-140q0-12 10-17zM690 665l190-48 30 122-188 50zM725 765l45-55q12-12 28 0l80 40M830 718l25-18q12-5 45 12M770 622l45-45q12-8 28 0l25 20M915 655l22 25-8 35M672 705q-20 15-10 35l30 35M735 815l20 25q12 8 25-2l60-50"/>
        <path d="M1080 773q-70 0-80-60l-10-40q-25-20-10-40 25-15 38 10l2 30q-15 15-30 2M1010 635q0-35 30-25 10 15 5 40M1033 600q-5-70 15-65 20-5 22 40l5 75M1045 660l35-8M1035 665q-15 25 45 23M1005 900l10-65 40 38 25 5"/>
      `
    },
    {
      at: [360, 940], scale: FINE,
      dots: [[26,92,4],[48,128,5],[65,51,7],[131,37,3],[153,93,4],[93,127,2],[180,158,5],[135,190,3],[186,220,5],[417,253,4],[582,187,5],[259,332,3],[291,377,4],[317,446,7],[359,436,3],[348,484,4],[522,429,4],[549,451,4],[792,467,4],[862,463,4],[843,503,3],[801,527,3],[825,584,6],[901,146,4],[931,195,6],[990,185,3],[903,246,4],[970,240,3],[909,289,4],[912,346,5],[957,378,2],[1043,425,6],[1065,486,3],[117,535,4],[93,580,5],[363,624,3],[301,658,5],[262,721,3],[309,764,4],[494,758,4],[530,787,3],[570,728,4],[587,782,6],[35,836,5],[93,867,6],[919,761,4],[774,871,3],[819,874,4],[215,519,3],[361,342,6],[237,240,1],[778,274,11],[778,274,4],[819,227,3],[740,724,6],[740,724,2],[1027,836,5],[1065,240,5],[1065,240,2],[108,390,20],[108,390,11],[102,345,1],[134,352,1],[152,374,1],[152,408,1],[124,432,1],[92,428,1],[68,404,1],[73,368,1],[605,505,1],[613,512,1],[1005,872,1],[1016,874,1]],
      marks: [['spark',826,376,15,40],['gear',361,342,14,0],['starfish',432,440,17,-5],['starfish',388,728,20,10],['plus',225,646,13,-12],['heart',202,883,8,-10],['heart',269,872,9,-5]],
      words: [['Hi',415,942,34,0]],
      art: `
        <path d="M185 45q-4-10 10-15l105-28q12-2 16 8l12 45M185 45l22 80q3 8 15 5l12 18 20-25 35-20M225 60l60-22q5 6-2 12l-53 18q-8 0-5-8zM235 78l50-18q8 4 2 12l-48 15q-8-2-4-9M328 58l0 15 32 8-18 28-5-12-30 8-2-15-12 15M310 92l28-5"/>
        <path d="M48 180q15-15 45-12 10 5 6 30l-20 5 7 57M48 180v70l5 15M50 205h25M52 225h28M55 243h28M20 290q0-18 20-22l80-10q10 2 14 45M20 290l15 35M0 350q55-55 145-45 90 15 95 80-10 100-230 93"/>
        <path d="M205 255q10-50 70-77-5 12 0 22 40-2 75-5 20-15 25-25 0 20-10 35 20 0 25 15-15 10-40 3-40 60-145 52M240 217q30 15 25 60M275 242q10-20 35-18 10 8-15 15"/>
        <path d="M343 0q20 50 75 65 60 5 125-12M415 68q-65 70-10 100 30 10 55-5 45 10 30 25-30 20-50 25 0 15 45 5 55-20 45-65-2-35-55-38-10-15 15-12 70 25 115 0M542 0q-5 70 60 110 80 0 82 50-10 40-75 55 15 15 75-10 50-20 38-65-15-60-60-95-15-25-12-45M740 0q-10 80 25 105 35 10 60 0 15-20 60-45 5 0-8 25-50 95-155 78M745 10q90 40 180-10"/>
        <path d="M375 40q15-30 40 5v15M450 62q20-45 52 0M648 60q-35-30-8-45M502 95q20-15 42 20M495 130q10-15 35 15-15 15-35-15M500 195q10-20 25-15M685 85q-12 20 5 35 20 5 20-10M685 190q5-25 30-18M748 100q15 25 30 15M800 118q25 20 35-20M845 25q20-45 45-2"/>
        <path d="M925 60q-5-15 12-20l143-32M925 60l15 85q2 12 18 10l122-20M973 62q10-10 18 0l4 35q-10 12-17 0zM965 92q0 20 25 20 20-5 15-25M990 112l3 17M1035 55l38 18-28 25z"/>
        <path d="M475 280q-5-25 18-26 20 3 14 28-8 20-18 14-12-5-14-16M528 265q-5-25 25-28 30 5 22 35-15 30-27 25-18-8-20-32M598 288q-5-22 18-24 22 3 16 25-8 20-18 15-12-5-16-16M488 367q5-60 65-60 45 5 50 68zM445 343q5-50 62-38M445 343l40 5M592 315q50-8 58 40l-42 2"/>
        <path d="M697 245q0-10 10-12l28-8q0-15 10-20l45-10q8 0 10 14l35-4q10 0 14 10l10 70q0 12-10 15l-110 35q-12 2-17-10zM752 222l32-8q6 8 0 12l-30 8q-6-5-2-12"/>
        <path d="M970 335q30-15 45-75 15-15 35-12M970 335l110 35M1015 357q15 35 35 10M1070 275l-5 40M1055 250l25-5"/>
        <path d="M640 380q-5 50 30 78M670 458q-10-60 45-90 20 60-20 85l-25 5M640 380q20-10 40 15M690 460q40 15 65-45-20-10-35-5M665 455q-5 40 20 68M680 455q-10 30 0 65M680 522q-35-10-43 45 5 50 60 50 60-5 57-65-10-70-60-65-20 5-15 40l25 30"/>
        <path d="M872 500q30 0 25-22l-5-10q18-5 18-15l-3-20q100-20 120 60l15 95q0 10-20 20l-125 30q-10 2-15-20zM940 430q60 20 85 180M972 430q60 35 68 140l-20 40M905 520l18 8-15 10M973 510l-16 8 16 5M928 572l45-12M940 570q0 30 18 28 15-5 10-32M955 568v15M950 635l15 48q15 8 22-5l-12-48"/>
        <path d="M190 495l100 10q15 2 15 10l0 10 28-5-5 52-25-12-5 15-5 6-100-12q-10-2-10-10l5-55q0-5 2-9z"/>
        <ellipse cx="500" cy="590" rx="94" ry="74" transform="rotate(-25 500 590)"/><ellipse cx="506" cy="586" rx="54" ry="38" transform="rotate(-25 506 586)"/>
        <path d="M488 520q-10-45 10-40 15 0 14 35M488 520l8 28M540 515l-5 30M555 570l35-5M550 600l30 12M512 625l15 28M485 632l-5 35M452 615l-30 20M455 580l-18-20M570 522q45-55 60-15-10 35-38 35M415 585q-35 5-38-20 10-12 45-5M585 597q35 0 32 15-15 15-40 5M480 670q-5 45 12 40 20 0 16-45"/>
        <path d="M0 655q40 0 50 50 2 50-50 70M0 600l5-50q15-15 35 0l-5 115M0 700l5 15M95 645q0-35 35-38 35 2 35 38-5 40-30 47-35-8-40-47M80 800q-5-75 43-95l25 17 15-25q60 0 80 65 0 12-12 10l-140 32q-12 0-11-4"/>
        <path d="M607 690q-2-14 12-18l210-55q12 0 20 12l34 145q-2 15-25 30l5 45q-5 8-65-28l-125 37q-15 0-22-15zM680 742q15-15 30 0M692 770l70-20q0 35-40 42-15 0-30-22M692 770l15 8 55-15M715 775q0 20 15 15 15-5 12-25M727 772l3 15M807 788l16 6 15-32M830 790l20-30"/><circle cx="722" cy="741" r="62"/><circle cx="740" cy="724" r="17"/>
        <path d="M903 705q10-15 22-20 5 35-5 38-15 5-17-18M1030 680q25 10 27 30-5 15-20 13-15-5-7-43M975 840q-25-35-5-48 25-5 38 15l72-25M975 840q15 15 5 45M1050 855q10 20 30 5M1055 848q10-8 25-5M1080 620q-15 15 0 35"/>
        <path d="M0 885l18-5-18 20M380 840v110q0 20 20 25l18 5v40q25-10 55-40h105q20 0 20-22v-120q0-20-20-20H400q-20 2-20 22"/>
        <circle cx="240" cy="894" r="84"/><path d="M215 925q40 0 60-12-5 30-35 30-15-2-25-18"/>
      `
    },
    {
      at: [0, 1220], scale: FINE,
      dots: [[664,117,5],[900,52,4],[950,30,6],[931,107,3],[848,232,3],[882,256,4],[879,294,4],[1049,400,3],[1047,476,5],[1040,534,7],[868,572,4],[53,441,6],[114,449,4],[137,612,5],[110,660,5],[175,629,4],[229,634,3],[10,714,3],[0,778,5],[6,841,3],[57,847,3],[404,687,8],[470,672,5],[522,665,4],[572,669,6],[612,645,3],[519,547,5],[535,588,3],[590,597,6],[470,754,5],[420,744,3],[530,791,4],[566,841,3],[732,596,4],[794,608,6],[745,458,4],[714,487,3],[772,493,4],[667,848,3],[27,92,5],[27,92,1],[578,227,3],[606,236,3],[1038,239,3],[984,727,1],[1001,722,1]],
      marks: [['spark',876,157,11,10],['heart',893,383,15,10],['star',146,519,12,10],['star',706,662,17,12],['star',10,268,12,0],['note',780,740,14,0]],
      words: [],
      art: `
        <path d="M65 360L85 90q5-25 30-26l355 35q25 2 26 30l-20 275M120 100l345 36q8 2 7 10l-22 215q-2 8-10 7L95 332q-8-2-7-10l20-215q2-8 12-7zM10 355l205 22 5 12 115 15 8-15 197 22q-2 45-45 40L45 405q-40-5-35-50z"/>
        <path d="M207 250q-10-60 45-92 65-20 100 30 25 55-15 100-45 40-95 8l-42 4zM225 240c0-85 105-95 122-25 8 50-30 85-75 80q-20-2-35-15l-10 2zM255 205q10-15 18 0l5 20q-10 10 15 25l15-5q12 5 12 10-10 20-35 10-40-15-30-60"/>
        <path d="M0 95q15-3 18 5 40 30 28 65l-5 40q-25-5-41-15M204 455l43 6-5 40-43-5zM299 462l43 5-5 45-43-6zM250 508l37 4v20l20 2-5 60-22-4v-20l-40-2-2 18-20-2 6-60 20 2z"/>
        <path d="M388 473l48 22-22 47-12-22q-40 22-31 60 12 32 50 32 45-5 44-52-12-20-10-32 8-15 20-5 15 25 8 50-20 55-75 52-52-8-56-60 0-40 42-70z"/>
        <path d="M530 105q40-50 105-105M530 105q5 20 30 30l10-3 105-85q10-20 18-47M557 83q10 30 35 32M567 73q10 25 38 35M640 10l5 12 15 2q5 20 15 20M748 55q30-25 55 5 25 10 28 45-10 55-60 55-25-5-40-25-30-40-18-70 15-20 35-10M800 75q-10-25 18-38 0 30-10 36M260 0q5 38 40 38 65 0 58-28-5-5-25-10M405 0q15 40 60 35 50-15 35-30"/>
        <path d="M637 325c-60 0-105-10-105-80 0-90 120-75 180-42 60 30 70 60 68 120l-12 90c0 60 60 75 120 45q10 10-45 65-45 45-110 18-60 30-100 5-30-30 5-52 40-10 52 15M620 538q-90-5-85-45 20-30 62-10M580 475q-5-30 22-70l-25-3q-30-5-32-25 5-25 60-15 35-5 32-37M670 183l30-25q8 2 12 40 15-15 35-12l5 25q20-10 28-5l0 30q15 0 22 5l-15 20q15 5 17 12l-20 14q18 2 20 14l-20 12q15 6 16 15l-18 12q15 8 14 15l-20 12q12 6 14 14l-22 14q15 2 18 10l-22 14 18 16-22 12q18 0 22 12 16-8 26 8 18-12 30 6M740 403q-80-50-100-20-15 40 45 30M565 275q30 10 50 10-25 35-50-10M695 252q20-8 27 12"/>
        <path d="M905 220l60-42 80-27 35-25M905 220l80 142 65-8 30-25M965 330l60-30 55-50M970 340l60-30 50-38M960 182l10 18M980 218l12 20M1002 256l14 24M1028 305l8 15M1043 335l8 15M1045 150l8 18M1062 185l8 15"/>
        <path d="M1020 240q5-25 25-20 18 15 8 45-30-10-33-25M950 440q8-25 28-18 15 5 10 30l-5 30q-8 20-25 13-20 0-15-25zM922 465q-10 45 35 53 45-5 47-42M955 518l-5 25h8l3-25M1005 0l0 115 75-45M1010 0l40 38h30"/>
        <circle cx="5" cy="577" r="83"/><circle cx="5" cy="577" r="66"/><path d="M0 550l8-20 10 50-18 30M42 552l12-10M30 618l8 10M0 560l15 5M0 570l15 5"/>
        <path d="M68 715q0-12 10-15l250-35q12 0 15 12l12 85q-2 12-14 13L100 808q-10 2-14-18l-32 0 20-40zM105 723l178-25q8 5 2 12l-175 28q-10-5-5-15zM115 758l160-22q8 5 2 12L120 772q-10-5-5-14zM185 855q0-22 20-27l235-30q15 0 18 15l4 42M215 850l205-20q6 8 0 22"/>
        <path d="M535 718l145 25-15 38-50-20 38 35-20 33-10 2zM705 855l12-35q5-10 18-8 50 15 60 20 10 10 15 20M730 835l10-20M748 838l10-18M765 845l8-18M785 850l5-20"/>
        <path d="M890 660q20-75 85-78 50 5 95 50M880 640q-25-25-42 20-10 60 25 90l20-10q10-60-3-100M880 640l18-2M882 665l8 35q2 60 35 85 25 25 60 18M862 750q0 60 8 105M885 745q25 50 38 105M905 730q-20-60 35-75 30 0 42 15 20-40 65-30 40 35 10 85 10 80-60 85-60-20-48-65-35-10-44-15M975 765q30 0 55-20 0 30-30 32-20 0-25-12M930 700q10-20 20-5 5 25-10 25-10-5-10-20M1018 680q10-20 20-5 5 25-10 25-10-5-10-20M1060 590q10-10 20 0M1040 605l20-5 20 45M1055 855l5-30 20-5"/>
      `
    },
    {
      at: [360, 1220], scale: FINE,
      dots: [[56,109,4],[80,67,3],[113,97,4],[93,28,6],[345,142,6],[358,205,4],[153,284,3],[485,215,4],[480,262,3],[417,267,4],[439,315,6],[561,374,3],[673,347,5],[701,289,3],[704,198,7],[663,149,4],[643,100,3],[820,377,5],[833,443,3],[830,497,3],[877,493,4],[878,545,3],[221,393,3],[228,450,4],[273,446,5],[327,427,6],[392,417,4],[211,488,3],[10,519,4],[199,647,4],[157,679,4],[117,712,5],[162,735,4],[206,716,7],[252,723,3],[107,828,3],[476,519,2],[509,561,6],[561,611,3],[631,633,6],[620,681,3],[657,587,4],[702,586,4],[889,683,3],[859,716,4],[934,711,5],[967,699,3],[852,761,4],[1013,360,8],[41,424,4],[145,411,4],[1011,615,5],[801,799,3],[1077,175,4]],
      marks: [['spark',128,162,11,8],['spark',713,73,14,10],['spark',590,832,11,8],['plus',1012,284,13,12]],
      words: [['文',175,342,46,-8],['A',300,388,54,-8],['09:28',562,532,28,-15],['W',368,805,14,-8]],
      art: `
        <path d="M0 130q15-15 25-5 35 75 60 150 0 10-10 15L0 330M0 260l55-62M55 210l-30 35 30 45M5 255l35 40M20 280l5 20M0 50l20-12"/>
        <path d="M15 410q-10-10 5-30 15-50 70-52 50 5 62 60 35 0 25 40-15 15-5 35-10 10-25-10l-2-8-95 12q0 30-15 20-15 0-12-20-20-20-8-47M42 395q0-50 50-50 40 5 45 40z"/>
        <path d="M578 265q-70-85-28-88 20 0 28 15 15-25 40-8 10 20-40 81zM578 265q70-65 85-30 5 15-12 22 20 8 8 28-20 10-81-20zM578 265q-60-55-72-15 5 15 10 8-20 25 0 32 30 5 62-25zM578 265v60q0 15 12 14 14-2 14-20 20 10 25-5 0-15-51-49M578 265l-68 65q0 15 10 5z"/>
        <path d="M780 265q-40-70-35-100l5-45q15-25 30 5 0 50 40 65 40-20 10-60-20-20-50-35-10-20 20-12 60 15 75 40 15 20 12 48M875 130q15-30 5-80 20-25 35 0l5 55q-5 35-15 55M920 105q10-40 30-45 20 15 10 30-20 50-35 70 40-45 55-45 15 5 8 20-40 25-85 75-30 25-48 60M765 265l95 8q12 5 12 20l-5 25q-5 10-15 10l-88-8q-15-5-12-22l5-25z"/>
        <path d="M875 380q-10 55 45 58 35 0 55-20 35-30 105 10M875 380q45-110 70-135 50-55 135-20M1080 310l-8 32 8 5M1080 120q-25-5-35-35M965 470q0-40 40-42 50 10 45 50-15 20-35 10-15-20-20 0 10 20-5 15-25-10-25-33M648 0q5 20 25 18l80-18M820 0l45 10M980 0q15 95 100 80"/>
        <path d="M925 515l-35 75q-20 50 35 65l40 7q30 0 25-25M920 510q60-15 110 45-35 20-85-15-20-15-25-30M935 515q50 0 80 38M1020 570l-5 18M990 615q-5-25 20-30 30 0 30 30-5 35-35 30-10 0-10-10"/>
        <path d="M525 470q-5-20 15-30l210-60q25-5 35 10l20 70q2 20-20 28l-200 65q-22 8-35-10zM585 558l180-50q20-8 20 5 0 8-10 12l-175 48q-15 0-15-15M722 382q10-12 22-3M475 390q5-3 10 0l25 20q5 10-5 8l-30-20zM457 432q5-5 12-3l28 4q6 5-2 10l-35-3zM460 463l35-7q8 4 2 10l-35 6q-8-4-2-9"/>
        <circle cx="123" cy="566" r="70"/><path d="M98 535l55 18q5 5 0 10l-35 38q-5 0-5-5z"/>
        <circle cx="339" cy="586" r="106"/>
        ${[0, 45, 90, 135, 180, 225, 270, 315].map(a => `<path d="M339 574l-18-55q-5-18 18-18t18 18z" transform="rotate(${a} 339 586)"/>`).join('')}
        <path d="M475 625q0-15 15-15l165 180q0 15-15 17zM495 610l15-12q10-2 10 12l-5 8 15 2q5 10-5 18l18-2q5 10-5 20l15-4 15 12-20 15"/>
        <path d="M697 625q30-40 68-40 55 0 72 45 10 60-15 75-35 40-60 20-65-45-65-75 0-15 0-25M690 660q-25 30 60 78M680 690q-30 5-24 35 15 15 45 10M780 580q35-20 60 60M810 568q10-20 25-12 15 30 5 70M700 735q20 12 45 0"/>
        <path d="M0 580q40 15 48 90-5 30-30 20M0 640q15 20 18 60 5 50-18 70M20 690q10 80 20 110 15 20 40 0 5-20-25-90-10-25-22-22M0 828l22 5-15 20M155 800q-5-12 10-17l160-35q15-10 155-50 10 2 12 15l10-3q15 0 18 15l16 125M155 800l12 52M178 852l-10-40q0-15 15-17l155-42 25 98M340 755l145-42M225 840l75-18q8 6 0 14l-70 14M425 775l65-15q6 6 0 12l-65 14q-8-4 0-11zM393 825l105-24q6 6 0 14l-102 20q-6-4-3-10zM430 850l75-8"/>
        <path d="M682 850l-8-30q0-12 12-14l30-5q0-20 15-25l35-8q8 2 10 12l35-4q10 2 12 12l12 64M728 795l35-10q6 8 0 12l-30 8q-8-5-5-10M724 852q0-38 35-38 28 5 28 38M740 852q0-22 15-20 14 2 14 20"/>
        <path d="M880 850q-15-70 15-85 40-20 55 30l20 45q-5 15-35 10M900 852q0-40 8-55 20 25 60 45M918 838l25 12M990 850l5-75q5-85 40-95 50 0 45 60M990 775q50-20 52-60 10 30 28 80l-10-2q-15-20-18-35-20 15-50 20M1030 850l30-60"/>
      `
    }
  ];

  const SHAPES = {
    star: 'M0-10 2.900-4 9.500-3.100 4.700 1.500 5.900 8.100 0 5-5.900 8.100-4.700 1.500-9.500-3.100-2.900-4Z',
    spark: 'M0-10Q1.500-1.500 10 0 1.500 1.500 0 10-1.500 1.500-10 0-1.500-1.500 0-10Z',
    heart: 'M0 9C-4 6-10 2-10-3-10-9-3-10 0-5 3-10 10-9 10-3 10 2 4 6 0 9Z',
    plus: 'M-2-8Q0-12 2-8V-2H8Q12 0 8 2H2V8Q0 12-2 8V2H-8Q-12 0-8-2H-2Z',
    gear: 'M-2-10H2L3-7 6-8 9-5 7-2 10-1V3L7 4 8 7 5 9 3 7 2 10H-2L-3 7-6 8-9 5-7 3-10 2V-2L-7-3-8-6-5-9-3-7Z',
    starfish: 'M-1-9Q0-12 2-9L3-3 9-5Q12-4 9-1L4 2 8 8Q8 11 5 9L0 5-5 10Q-8 10-6 6L-4 1-9-2Q-10-5-7-4L-2-3Z',
    note: 'M-4 5V-6L7-9V5M-4-3 7-6M-4 5A2.500 2.500 0 1 1-5 4M7 5A2.500 2.500 0 1 1 6 4'
  };

  class DoodleWallpaper extends HTMLElement {
    drawTile({ at: [tx, ty], scale: [sx, sy], dots, marks, words, art }) {
      const px = x => (tx + x * sx).toFixed(1);
      const py = y => (ty + y * sy).toFixed(1);
      return `
        <g transform="translate(${tx} ${ty}) scale(${sx} ${sy})">${art}</g>
        ${dots.map(([x, y, r]) => `<circle cx="${px(x)}" cy="${py(y)}" r="${r}"/>`).join('')}
        ${marks.map(([kind, x, y, r, turn]) =>
          `<path d="${SHAPES[kind]}" transform="translate(${px(x)} ${py(y)}) rotate(${turn}) scale(${r / 10})"/>`).join('')}
        ${words.map(([text, x, y, size, turn]) =>
          `<text font-size="${size}" transform="translate(${px(x)} ${py(y)}) rotate(${turn})">${text}</text>`).join('')}
      `;
    }

    connectedCallback() {
      this.attachShadow({ mode: 'open' });
      this.shadowRoot.innerHTML = `
        <style>
          :host {
            display: block;
            position: absolute;
            inset: 0;
          }
          svg {
            display: block;
            width: 100%;
            height: 100%;
            fill: none;
            stroke: #17242a;
            stroke-width: 1.600;
            stroke-linecap: round;
            stroke-linejoin: round;
          }
          path, circle, ellipse { vector-effect: non-scaling-stroke; }
          text {
            font-family: Roboto, "Noto Sans CJK SC", sans-serif;
            font-weight: 700;
            stroke-width: 1.300;
          }
        </style>
        <svg viewBox="0 160 720 1344" preserveAspectRatio="xMidYMin slice" aria-hidden="true">
          ${TILES.map(tile => this.drawTile(tile)).join('')}
        </svg>
      `;
    }
  }

  customElements.define('doodle-wallpaper', DoodleWallpaper);
  customElements.define('status-bar', StatusBar);
  customElements.define('channel-header', ChannelHeader);
  customElements.define('chat-chip', ChatChip);
  customElements.define('reaction-pill', ReactionPill);
  customElements.define('chat-message', ChatMessage);
  customElements.define('nav-bar', NavBar);
  customElements.define('channel-app', ChannelApp);
</script>
</body>
</html>
